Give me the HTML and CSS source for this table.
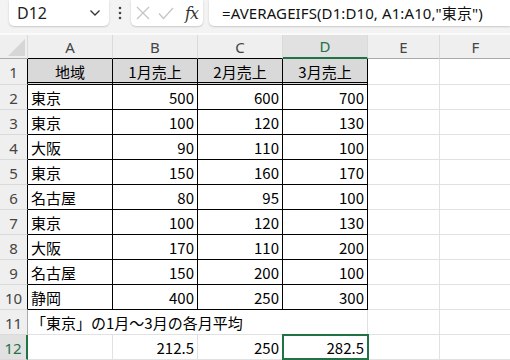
FILE: index.html
```html
<!DOCTYPE html>
<html lang="ja">
<head>
<meta charset="utf-8">
<title>AVERAGEIFS</title>
<link rel="stylesheet" href="styles.css">
</head>
<body>
<div class="fbar">
  <div class="namebox">
    <span class="nb-text">D12</span>
    <svg class="chev" width="12" height="8" viewBox="0 0 12 8"><path d="M1.5 1.5 L6 6 L10.5 1.5" fill="none" stroke="#333" stroke-width="1.3"/></svg>
  </div>
  <div class="dots">
    <svg width="4" height="14" viewBox="0 0 4 14"><circle cx="2" cy="2" r="1.3" fill="#444"/><circle cx="2" cy="7" r="1.3" fill="#444"/><circle cx="2" cy="12" r="1.3" fill="#444"/></svg>
  </div>
  <div class="fxbox">
    <svg class="ico" width="14" height="14" viewBox="0 0 14 14"><path d="M1 1 L13 13 M13 1 L1 13" stroke="#c4c4c4" stroke-width="1.2" fill="none"/></svg>
    <svg class="ico" width="16" height="14" viewBox="0 0 16 14"><path d="M1 7.5 L5.5 12.5 L15 2" stroke="#c4c4c4" stroke-width="1.2" fill="none"/></svg>
    <span class="fx">fx</span>
  </div>
  <div class="formula">=AVERAGEIFS(D1:D10, A1:A10,"東京")</div>
</div>
<div class="band"></div>
<div class="sheet">
  <div class="corner"><span class="tri"></span></div>
  <div class="ch">A</div><div class="ch">B</div><div class="ch">C</div><div class="ch sel">D</div><div class="ch g">E</div><div class="ch g">F</div>

  <div class="rh">1</div>
  <div class="c t hd">地域</div><div class="c t hd">1月売上</div><div class="c t hd">2月売上</div><div class="c t hd">3月売上</div><div class="c"></div><div class="c"></div>

  <div class="rh">2</div>
  <div class="c t">東京</div><div class="c t n">500</div><div class="c t n">600</div><div class="c t n">700</div><div class="c"></div><div class="c"></div>

  <div class="rh">3</div>
  <div class="c t">東京</div><div class="c t n">100</div><div class="c t n">120</div><div class="c t n">130</div><div class="c"></div><div class="c"></div>

  <div class="rh">4</div>
  <div class="c t">大阪</div><div class="c t n">90</div><div class="c t n">110</div><div class="c t n">100</div><div class="c"></div><div class="c"></div>

  <div class="rh">5</div>
  <div class="c t">東京</div><div class="c t n">150</div><div class="c t n">160</div><div class="c t n">170</div><div class="c"></div><div class="c"></div>

  <div class="rh">6</div>
  <div class="c t">名古屋</div><div class="c t n">80</div><div class="c t n">95</div><div class="c t n">100</div><div class="c"></div><div class="c"></div>

  <div class="rh">7</div>
  <div class="c t">東京</div><div class="c t n">100</div><div class="c t n">120</div><div class="c t n">130</div><div class="c"></div><div class="c"></div>

  <div class="rh">8</div>
  <div class="c t">大阪</div><div class="c t n">170</div><div class="c t n">110</div><div class="c t n">200</div><div class="c"></div><div class="c"></div>

  <div class="rh">9</div>
  <div class="c t">名古屋</div><div class="c t n">150</div><div class="c t n">200</div><div class="c t n">100</div><div class="c"></div><div class="c"></div>

  <div class="rh rlast">10</div>
  <div class="c t">静岡</div><div class="c t n">400</div><div class="c t n">250</div><div class="c t n">300</div><div class="c"></div><div class="c"></div>

  <div class="rh rg">11</div>
  <div class="c spill">「東京」の1月～3月の各月平均</div><div class="c spill"></div><div class="c spill"></div><div class="c"></div><div class="c"></div><div class="c"></div>

  <div class="rh rsel">12</div>
  <div class="c"></div><div class="c n">212.5</div><div class="c n">250</div><div class="c n active">282.5</div><div class="c"></div><div class="c"></div>
</div>
</body>
</html>
```

FILE: styles.css
```css
html, body {
  margin: 0;
  padding: 0;
  background: #ffffff;
  overflow: hidden;
  width: 510px;
  height: 360px;
}

body {
  font-family: "Noto Sans CJK JP", sans-serif;
}

.fbar {
  height: 33px;
  background: #f3f3f3;
  display: flex;
  align-items: flex-start;
}

.namebox {
  margin-left: 9px;
  width: 100px;
  height: 26px;
  box-sizing: border-box;
  background: #ffffff;
  border-radius: 0 0 5px 5px;
  box-shadow: 0 1px 2px rgba(0, 0, 0, 0.18);
  display: flex;
  align-items: center;
  justify-content: space-between;
  padding: 0 8px 0 8px;
}

.nb-text {
  font-family: "Noto Sans", sans-serif;
  font-size: 16px;
  color: #222;
}

.dots {
  width: 22px;
  height: 26px;
  display: flex;
  align-items: center;
  justify-content: center;
}

.fxbox {
  width: 72px;
  height: 26px;
  box-sizing: border-box;
  background: #ffffff;
  border-radius: 0 0 5px 5px;
  box-shadow: 0 1px 2px rgba(0, 0, 0, 0.18);
  display: flex;
  align-items: center;
  padding-left: 5px;
  gap: 8px;
}

.fx {
  font-family: "DejaVu Serif", serif;
  font-style: italic;
  font-size: 16px;
  color: #333;
  letter-spacing: -1px;
  margin-left: 3px;
}

.formula {
  flex: 1;
  margin-left: 6px;
  height: 26px;
  background: #ffffff;
  border-radius: 0 0 0 5px;
  box-shadow: 0 1px 2px rgba(0, 0, 0, 0.18);
  padding-left: 13px;
  font-family: "Noto Sans", "Noto Sans CJK JP", sans-serif;
  font-size: 15px;
  letter-spacing: 0.1px;
  line-height: 26px;
  color: #111;
  white-space: nowrap;
  overflow: hidden;
}

.band {
  height: 2px;
  background: #fafafa;
}

.sheet {
  display: grid;
  grid-template-columns: 28px 85px 85px 85px 85px 72px 72px;
  grid-template-rows: 24px 26px repeat(11, 25px);
  font-size: 15px;
}

.sheet > div {
  box-sizing: border-box;
}

.corner {
  background: #efefef;
  border-right: 1px solid #dadada;
  border-bottom: 1px solid #ababab;
  position: relative;
}

.tri {
  position: absolute;
  right: 2px;
  bottom: 2px;
  width: 0;
  height: 0;
  border-left: 17px solid transparent;
  border-bottom: 17px solid #d6d6d6;
}

.ch {
  background: #efefef;
  border-right: 1px solid #dadada;
  border-bottom: 1px solid #000;
  display: flex;
  align-items: center;
  justify-content: center;
  color: #444;
  font-family: "Noto Sans", sans-serif;
  font-size: 15px;
}

.ch.g {
  border-bottom-color: #ababab;
}

.ch.sel {
  background: #e1e1e1;
  color: #217346;
  border-bottom: 2px solid #217346;
}

.rh {
  background: #efefef;
  border-right: 1px solid #000;
  border-bottom: 1px solid #dadada;
  display: flex;
  align-items: center;
  justify-content: center;
  color: #444;
  font-family: "Noto Sans", sans-serif;
  font-size: 15px;
  padding-top: 1px;
}

.rh.rg {
  border-right-color: #ababab;
}

.rh.rsel {
  background: #e1e1e1;
  color: #217346;
  border-right: 2px solid #217346;
}

.c {
  border-right: 1px solid #e1e1e1;
  border-bottom: 1px solid #e1e1e1;
  display: flex;
  align-items: center;
  padding: 1px 3px 0 3px;
  color: #000;
  white-space: nowrap;
  line-height: 1;
}

.c.t {
  border-right-color: #000;
  border-bottom-color: #000;
}

.c.hd {
  background: #d9d9d9;
  justify-content: center;
  border-bottom: 3px double #000;
}

.c.n {
  justify-content: flex-end;
}

.c.spill {
  border-right: none;
  overflow: visible;
}

.c.active {
  position: relative;
}

.c.active::after {
  content: "";
  position: absolute;
  top: -1px;
  left: -1px;
  right: -2px;
  bottom: -1px;
  border: 2px solid #217346;
}
```
